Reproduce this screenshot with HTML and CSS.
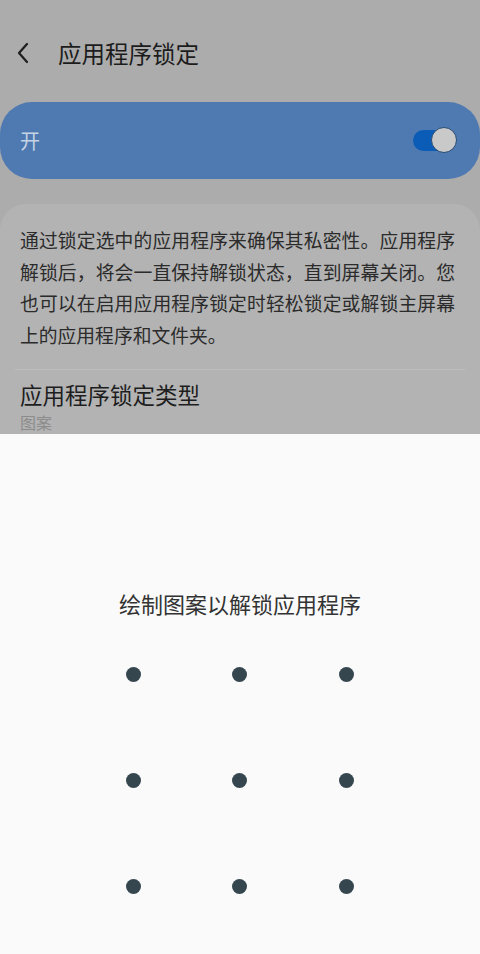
FILE: index.html
```html
<!DOCTYPE html>
<html lang="zh-CN">
<head>
<meta charset="utf-8">
<link rel="stylesheet" href="styles.css">
</head>
<body>
<div class="screen">
  <header class="appbar">
    <svg class="back" width="14" height="22" viewBox="0 0 14 22"><path d="M11 2 L3 11 L11 20" fill="none" stroke="#1e1e1e" stroke-width="2.2" stroke-linecap="round" stroke-linejoin="round"/></svg>
    <h1 class="title">应用程序锁定</h1>
  </header>
  <div class="master">
    <span class="master-label">开</span>
    <span class="switch"><span class="knob"></span></span>
  </div>
  <section class="card">
    <p class="desc">
      <span class="jl">通过锁定选中的应用程序来确保其私密性。应用程序</span>
      <span class="jl">解锁后，将会一直保持解锁状态，直到屏幕关闭。您</span>
      <span class="jl">也可以在启用应用程序锁定时轻松锁定或解锁主屏幕</span>
      <span class="ln">上的应用程序和文件夹。</span>
    </p>
    <div class="divider"></div>
    <div class="item">
      <div class="item-title">应用程序锁定类型</div>
      <div class="item-sub">图案</div>
    </div>
  </section>
  <div class="sheet">
    <div class="prompt">绘制图案以解锁应用程序</div>
    <div class="grid">
      <span class="cell"><span class="dot"></span></span>
      <span class="cell"><span class="dot"></span></span>
      <span class="cell"><span class="dot"></span></span>
      <span class="cell"><span class="dot"></span></span>
      <span class="cell"><span class="dot"></span></span>
      <span class="cell"><span class="dot"></span></span>
      <span class="cell"><span class="dot"></span></span>
      <span class="cell"><span class="dot"></span></span>
      <span class="cell"><span class="dot"></span></span>
    </div>
  </div>
</div>
</body>
</html>
```

FILE: styles.css
```css
html, body {
  margin: 0;
  padding: 0;
}
body {
  width: 480px;
  height: 954px;
  overflow: hidden;
  background: #acacac;
  font-family: "Noto Sans CJK SC", "Noto Sans", sans-serif;
}
.screen {
  position: relative;
  width: 480px;
  height: 954px;
  overflow: hidden;
  display: flex;
  flex-direction: column;
}
.appbar {
  height: 102px;
  box-sizing: border-box;
  padding-top: 30px;
  display: flex;
  align-items: flex-start;
}
.back {
  margin: 12px 0 0 16px;
}
.title {
  margin: 0 0 0 28px;
  font-size: 23.5px;
  font-weight: 400;
  line-height: 46px;
  color: #1c1c1c;
  height: 46px;
}
.master {
  height: 77px;
  background: #4e79b1;
  border-radius: 32px;
  display: flex;
  align-items: center;
  justify-content: space-between;
  padding: 0 20px 0 20px;
  box-sizing: border-box;
}
.master-label {
  font-size: 20px;
  color: #c6d3e5;
  line-height: 28px;
}
.switch {
  position: relative;
  width: 34px;
  height: 21px;
  border-radius: 11px;
  background: #0b5cb6;
  margin-right: 13px;
}
.knob {
  position: absolute;
  right: -10px;
  top: -3px;
  width: 24px;
  height: 24px;
  border-radius: 50%;
  background: #c9c9c9;
  border: 1.5px solid #274a75;
}
.card {
  margin-top: 25px;
  background: #b3b3b3;
  border-radius: 26px 26px 0 0;
  padding: 20px 20px 0 20px;
  flex: 1;
}
.desc {
  margin: 0;
  font-size: 18.8px;
  line-height: 31.5px;
  color: #2b2b2b;
}
.jl, .ln {
  display: block;
  text-align: justify;
  white-space: nowrap;
}
.jl {
  white-space: normal;
  text-align-last: justify;
  margin-right: 5px;
}
.divider {
  height: 1px;
  background: #bdbdbd;
  margin: 19px -5px 0 -5px;
}
.item {
  padding-top: 10px;
}
.item-title {
  font-size: 22.5px;
  line-height: 28px;
  color: #1e1e1e;
}
.item-sub {
  font-size: 16px;
  line-height: 20px;
  color: #8c8c8c;
  margin-top: 4px;
}
.sheet {
  position: absolute;
  left: 0;
  bottom: 0;
  width: 480px;
  height: 520px;
  background: #fafafa;
  display: flex;
  flex-direction: column;
  align-items: center;
  padding-top: 154px;
  box-sizing: border-box;
}
.prompt {
  font-size: 22px;
  line-height: 30px;
  color: #333333;
}
.grid {
  margin-top: 3px;
  display: grid;
  grid-template-columns: repeat(3, 106.5px);
  grid-auto-rows: 106px;
  margin-left: -1px;
}
.cell {
  display: flex;
  align-items: center;
  justify-content: center;
}
.dot {
  width: 15px;
  height: 15px;
  border-radius: 50%;
  background: #36464f;
}
```
